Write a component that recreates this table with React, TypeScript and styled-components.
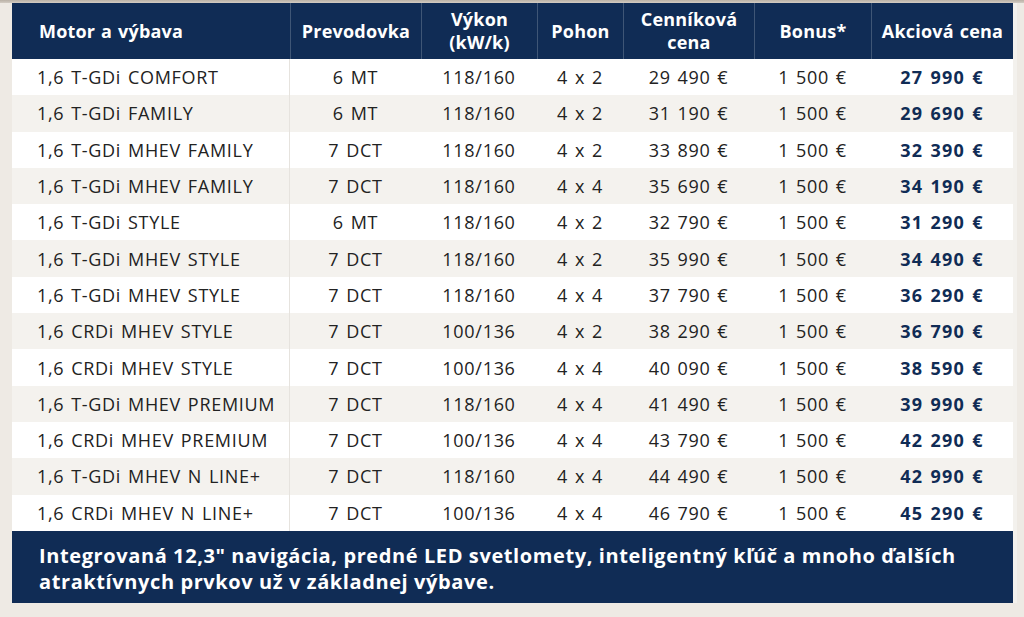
import React from "react";
import styled, { createGlobalStyle } from "styled-components";

const COLS = "278px 131px 116px 86px 131px 117px 142px";
const NAVY = "#102c55";

const headers = [
  "Motor a výbava",
  "Prevodovka",
  "Výkon\n(kW/k)",
  "Pohon",
  "Cenníková\ncena",
  "Bonus*",
  "Akciová cena",
];

const rows = [
  ["1,6 T-GDi COMFORT", "6 MT", "118/160", "4 x 2", "29 490 €", "1 500 €", "27 990 €"],
  ["1,6 T-GDi FAMILY", "6 MT", "118/160", "4 x 2", "31 190 €", "1 500 €", "29 690 €"],
  ["1,6 T-GDi MHEV FAMILY", "7 DCT", "118/160", "4 x 2", "33 890 €", "1 500 €", "32 390 €"],
  ["1,6 T-GDi MHEV FAMILY", "7 DCT", "118/160", "4 x 4", "35 690 €", "1 500 €", "34 190 €"],
  ["1,6 T-GDi STYLE", "6 MT", "118/160", "4 x 2", "32 790 €", "1 500 €", "31 290 €"],
  ["1,6 T-GDi MHEV STYLE", "7 DCT", "118/160", "4 x 2", "35 990 €", "1 500 €", "34 490 €"],
  ["1,6 T-GDi MHEV STYLE", "7 DCT", "118/160", "4 x 4", "37 790 €", "1 500 €", "36 290 €"],
  ["1,6 CRDi MHEV STYLE", "7 DCT", "100/136", "4 x 2", "38 290 €", "1 500 €", "36 790 €"],
  ["1,6 CRDi MHEV STYLE", "7 DCT", "100/136", "4 x 4", "40 090 €", "1 500 €", "38 590 €"],
  ["1,6 T-GDi MHEV PREMIUM", "7 DCT", "118/160", "4 x 4", "41 490 €", "1 500 €", "39 990 €"],
  ["1,6 CRDi MHEV PREMIUM", "7 DCT", "100/136", "4 x 4", "43 790 €", "1 500 €", "42 290 €"],
  ["1,6 T-GDi MHEV N LINE+", "7 DCT", "118/160", "4 x 4", "44 490 €", "1 500 €", "42 990 €"],
  ["1,6 CRDi MHEV N LINE+", "7 DCT", "100/136", "4 x 4", "46 790 €", "1 500 €", "45 290 €"],
];

function App() {
  return (
    <>
      <GlobalStyle />
      <Page>
        <TopEdge />
        <Table>
          <HeadRow>
            {headers.map((h, i) => (
              <HeadCell key={h} $first={i === 0}>
                {h}
              </HeadCell>
            ))}
          </HeadRow>
          {rows.map((r, ri) => (
            <Row key={ri} $alt={ri % 2 === 1}>
              {r.map((c, ci) => (
                <Cell key={ci} $first={ci === 0} $price={ci === 6}>
                  {c}
                </Cell>
              ))}
            </Row>
          ))}
          <Footer>
            Integrovaná 12,3" navigácia, predné LED svetlomety, inteligentný kľúč a mnoho ďalších
            <br />
            atraktívnych prvkov už v základnej výbave.
          </Footer>
        </Table>
      </Page>
    </>
  );
}

const GlobalStyle = createGlobalStyle`
  html, body {
    margin: 0;
    padding: 0;
    background: #eeeae4;
  }
  body {
    font-family: "Open Sans", "Liberation Sans", sans-serif;
    width: 1024px;
    height: 617px;
    overflow: hidden;
  }
`;

const Page = styled.div`
  width: 1024px;
  height: 617px;
  background: #eeeae4;
`;

const TopEdge = styled.div`
  height: 3px;
  background: linear-gradient(#b9b1a6, #d3ccc3);
`;

const Table = styled.div`
  width: 1001px;
  margin-left: 12px;
  box-shadow: 4px 0 0 #f3f1ed;
`;

const HeadRow = styled.div`
  display: grid;
  grid-template-columns: ${COLS};
  height: 56px;
  background: ${NAVY};
`;

const HeadCell = styled.div<{ $first?: boolean }>`
  display: flex;
  align-items: center;
  justify-content: ${(p) => (p.$first ? "flex-start" : "center")};
  padding-left: ${(p) => (p.$first ? "27px" : "0")};
  border-left: ${(p) => (p.$first ? "none" : "1px solid #3f5676")};
  color: #ffffff;
  font-weight: 700;
  font-size: 18px;
  letter-spacing: 0.2px;
  word-spacing: 1px;
  line-height: 23px;
  text-align: center;
  white-space: pre-line;
`;

const Row = styled.div<{ $alt: boolean }>`
  display: grid;
  grid-template-columns: ${COLS};
  height: 36.3px;
  background: ${(p) => (p.$alt ? "#f4f2ee" : "#ffffff")};
`;

const Cell = styled.div<{ $first?: boolean; $price?: boolean }>`
  display: flex;
  align-items: center;
  justify-content: ${(p) => (p.$first ? "flex-start" : "center")};
  padding-left: ${(p) => (p.$first ? "25px" : "0")};
  border-right: ${(p) => (p.$first ? "1px solid #e6e3de" : "none")};
  color: ${(p) => (p.$price ? NAVY : "#222222")};
  font-weight: ${(p) => (p.$price ? 700 : 400)};
  font-size: 18px;
  letter-spacing: ${(p) => (p.$price ? "1.2px" : "0.7px")};
  word-spacing: 1.5px;
  white-space: nowrap;
`;

const Footer = styled.div`
  background: ${NAVY};
  color: #ffffff;
  font-weight: 700;
  font-size: 20px;
  letter-spacing: 0.6px;
  line-height: 26px;
  padding: 12px 27px 8px;
`;

export default App;
